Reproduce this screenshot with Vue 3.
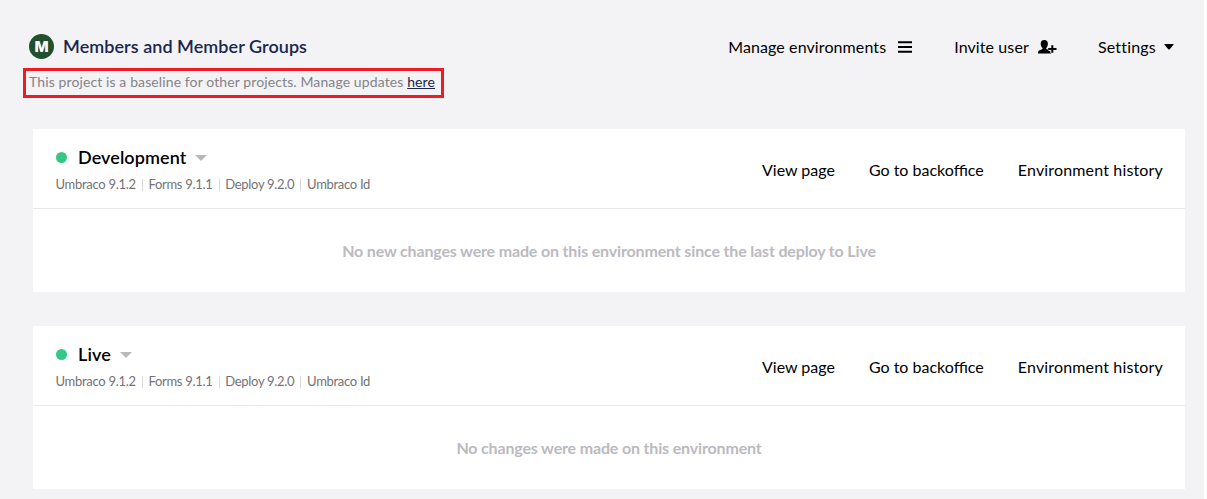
<script setup>
const versions = ['Umbraco 9.1.2', 'Forms 9.1.1', 'Deploy 9.2.0', 'Umbraco Id']
const environments = [
  { name: 'Development', message: 'No new changes were made on this environment since the last deploy to Live' },
  { name: 'Live', message: 'No changes were made on this environment' },
]
const links = ['View page', 'Go to backoffice', 'Environment history']
</script>

<template>
  <div class="page">
    <header class="top">
      <div class="project">
        <div class="title"><span class="logo">M</span><h1>Members and Member Groups</h1></div>
        <p class="baseline">This project is a baseline for other projects. Manage updates <a>here</a></p>
      </div>
      <nav class="menu">
        <a class="manage">Manage environments
          <svg width="14" height="12" viewBox="0 0 14 12"><path d="M0.500 1.200h13M0.500 6h13M0.500 10.800h13" stroke="#000" stroke-width="2.100" stroke-linecap="round" /></svg>
        </a>
        <a class="invite">Invite user
          <svg width="19" height="14" viewBox="0 0 19 14"><path d="M6.200 0C8.700 0 9.900 1.600 9.900 3.800 9.900 5.800 9.100 7.100 8.300 8v1L11.500 10.300c1.200.5 1.500 1.300 1.500 3.300H0c0-1.900.2-2.700 1.200-3.200L4.500 9V8C3.500 7.200 2.700 5.800 2.700 3.800 2.700 1.600 3.900 0 6.200 0Z" /><path d="M14.300 5.200v7.600M10.500 9h8" stroke="#f3f3f5" stroke-width="4" /><path d="M14.300 5.200v7.600M10.200 9h8.300" stroke="#000" stroke-width="2" /></svg>
        </a>
        <a class="settings">Settings
          <svg width="10" height="6" viewBox="0 0 10 6"><path d="M0.800 0h8.400Q10 0 9.500.700L5.700 5.200Q5 6 4.300 5.200L.5.700Q0 0 .8 0Z" /></svg>
        </a>
      </nav>
    </header>
    <main class="cards">
      <section v-for="env in environments" :key="env.name" class="card">
        <div class="head">
          <div class="info">
            <h2><i class="dot" /><span>{{ env.name }}</span><svg width="12" height="6" viewBox="0 0 12 6"><path d="M0 0h12L6 6Z" fill="#b9b8bd" /></svg></h2>
            <ul><li v-for="v in versions" :key="v">{{ v }}</li></ul>
          </div>
          <nav class="links"><a v-for="l in links" :key="l">{{ l }}</a></nav>
        </div>
        <p class="message">{{ env.message }}</p>
      </section>
    </main>
  </div>
</template>

<style>
body { margin: 0; background: #fff; }
</style>
<style scoped>
* { box-sizing: border-box; }
h1, h2, p, ul { margin: 0; padding: 0; }
.page { width: 1204px; height: 499px; overflow: hidden; background: #f3f3f5; font-family: Lato, sans-serif; color: #000; white-space: nowrap; }
.top { display: flex; justify-content: space-between; height: 129px; padding: 33px 29px 0 23px; }
.title { display: flex; align-items: center; height: 27px; padding-left: 6px; }
.logo { display: flex; align-items: center; justify-content: center; width: 25px; height: 25px; border-radius: 50%; background: #20502e; color: #fff; font-family: Inter, sans-serif; font-weight: 800; font-size: 15px; }
h1 { margin-left: 9px; font-size: 18px; line-height: 27px; font-weight: 600; letter-spacing: 0.05px; color: #1b264f; }
.baseline { width: 421px; height: 30px; margin-top: 8px; padding-left: 3px; border: 3px solid #ed1c24; font-size: 14px; line-height: 22px; letter-spacing: 0.11px; color: #858388; }
.baseline a { color: #1b264f; text-decoration: underline; }
.menu { display: flex; height: 27px; align-items: center; font-size: 16px; letter-spacing: 0.1px; }
.menu a { display: flex; align-items: center; }
.manage svg { margin-left: 12px; }
.invite { margin-left: 42px; }
.invite svg { margin-left: 9px; }
.settings { margin-left: 41px; letter-spacing: 0.2px; }
.settings svg { margin: 1px 1px 0 8px; }
.cards { display: flex; flex-direction: column; gap: 34px; padding: 0 19px 0 33px; }
.card { height: 163px; background: #fff; }
.head { display: flex; justify-content: space-between; height: 80px; padding: 16px 22px 0 23px; border-bottom: 1px solid #e9e9eb; }
h2 { display: flex; align-items: center; height: 26px; font-size: 18px; line-height: 24px; font-weight: 600; letter-spacing: 0.08px; }
h2 span { padding-bottom: 2px; }
.dot { width: 11px; height: 11px; margin: 0 11px 1px 0; border-radius: 50%; background: #35c786; }
h2 svg { margin-left: 9px; }
ul { display: flex; list-style: none; margin-top: 5px; margin-left: -0.5px; font-size: 13px; line-height: 17px; letter-spacing: -0.29px; color: #747277; }
li { display: flex; align-items: center; }
li + li::before { content: ""; width: 1px; height: 12px; margin: 0 5.7px 0 6px; background: #d8d7d9; }
.links { display: flex; gap: 34px; padding-top: 12px; font-size: 16px; line-height: 26px; }
.links a:last-child { letter-spacing: 0.16px; }
.message { height: 83px; line-height: 83px; text-align: center; font-size: 16px; letter-spacing: -0.16px; font-weight: 700; color: #bbbabf; }
</style>
